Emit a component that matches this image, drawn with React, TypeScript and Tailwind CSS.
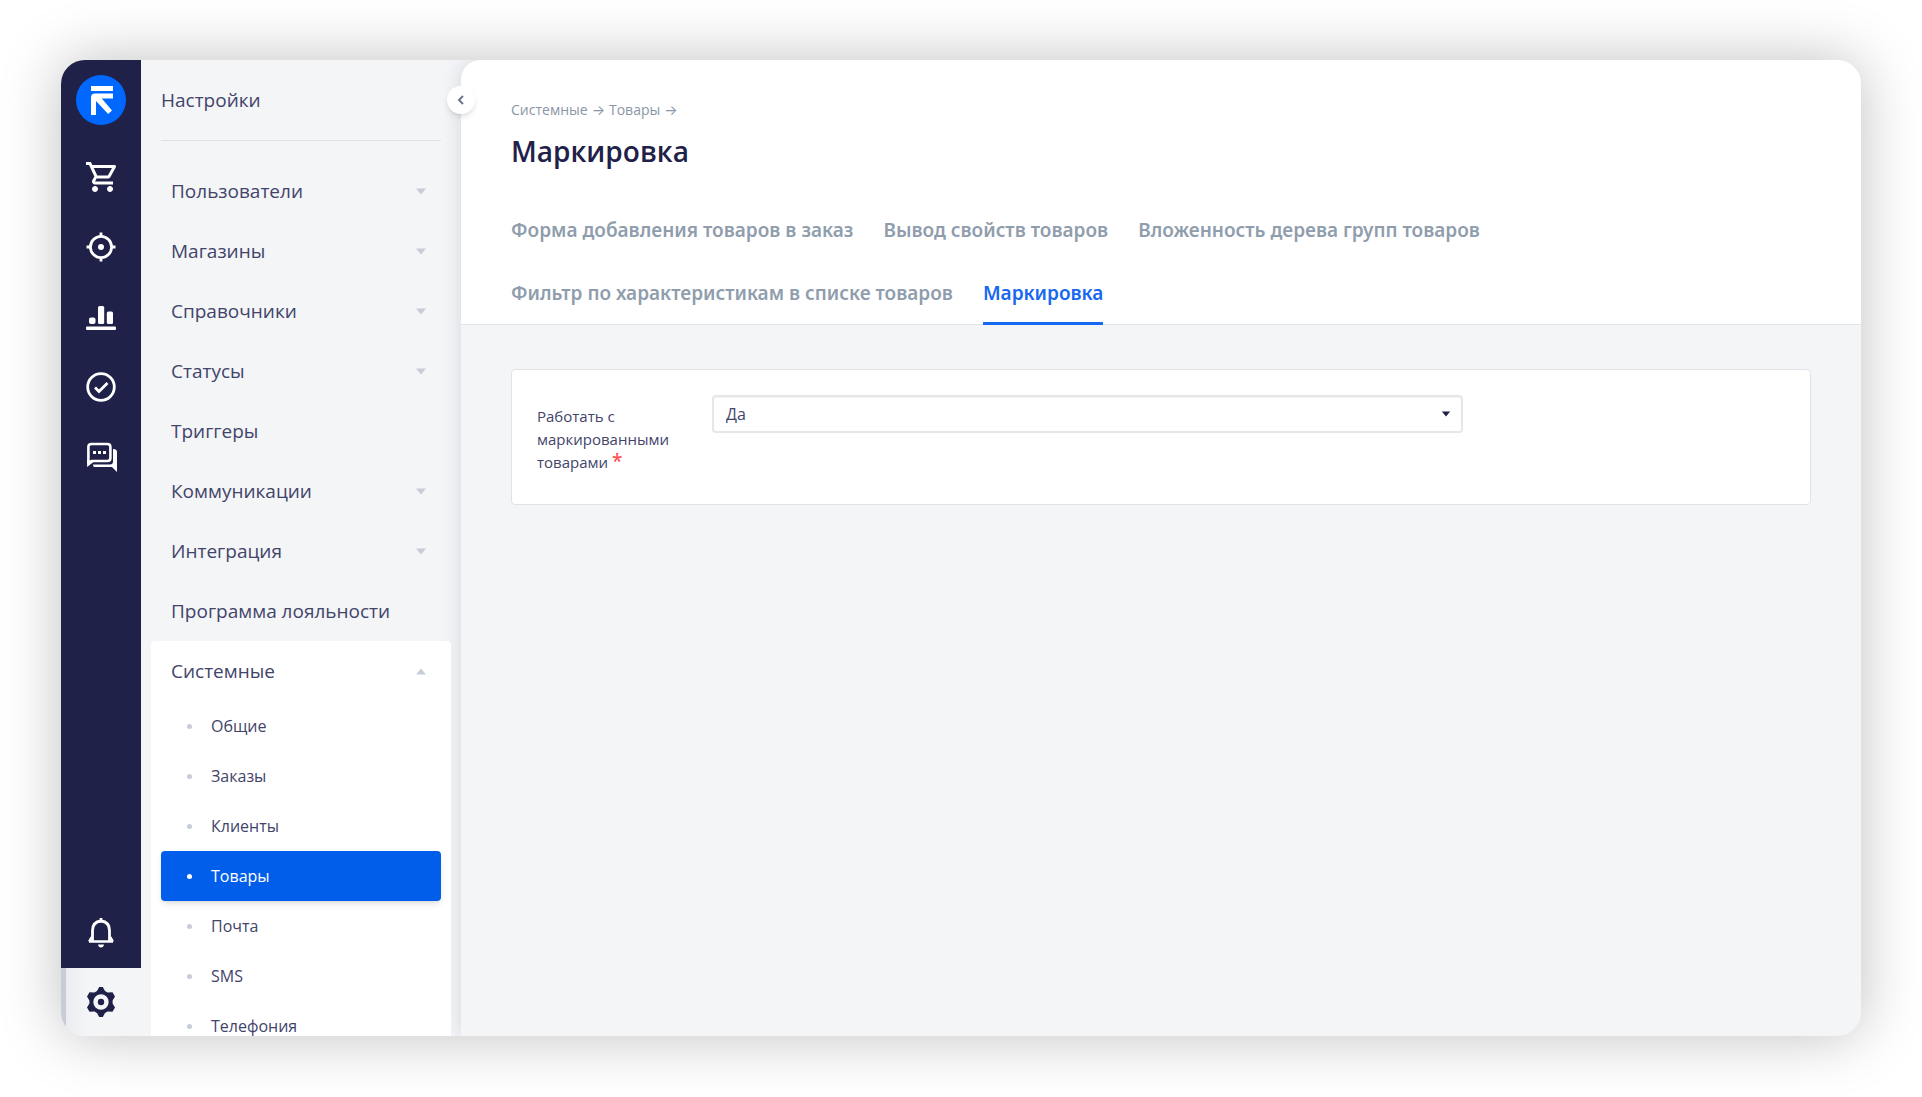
import { useState } from "react";
import type { ReactNode } from "react";
import clsx from "clsx";

interface Section {
  label: string;
  expandable: boolean;
}

const SECTIONS: Section[] = [
  { label: "Пользователи", expandable: true },
  { label: "Магазины", expandable: true },
  { label: "Справочники", expandable: true },
  { label: "Статусы", expandable: true },
  { label: "Триггеры", expandable: false },
  { label: "Коммуникации", expandable: true },
  { label: "Интеграция", expandable: true },
  { label: "Программа лояльности", expandable: false },
];

const SYSTEM_ITEMS = ["Общие", "Заказы", "Клиенты", "Товары", "Почта", "SMS", "Телефония"];

const TABS = [
  "Форма добавления товаров в заказ",
  "Вывод свойств товаров",
  "Вложенность дерева групп товаров",
  "Фильтр по характеристикам в списке товаров",
  "Маркировка",
];

function Logo() {
  return (
    <svg viewBox="0 0 50 50" className="size-[50px]" aria-hidden="true">
      <circle cx="25" cy="25" r="25" fill="#0068ff" />
      <path d="M15 11h22v5H15zM15 22.500q0-4 4-4h18v5H20V40h-5z" fill="#fff" />
      <path d="M19 22h5.500L36 35.500 32.200 39 20 26z" fill="#fff" />
    </svg>
  );
}

function CartIcon() {
  return (
    <svg viewBox="1 2 20 20" className="size-[30px]" fill="currentColor" aria-hidden="true">
      <path d="M15.550 13c.75 0 1.410-.41 1.750-1.030l3.580-6.490A.996.996 0 0 0 20.010 4H5.210l-.94-2H1v2h2l3.600 7.590-1.350 2.440C4.520 15.370 5.480 17 7 17h12v-2H7l1.100-2h7.450zM6.160 6h12.150l-2.760 5H8.530L6.160 6zM7 18c-1.100 0-1.990.9-1.990 2S5.900 22 7 22s2-.9 2-2-.9-2-2-2zm10 0c-1.100 0-1.990.9-1.990 2s.89 2 1.990 2 2-.9 2-2-.9-2-2-2z" />
    </svg>
  );
}

function TargetIcon() {
  return (
    <svg viewBox="0 0 30 30" className="size-[30px]" fill="none" stroke="currentColor" strokeWidth="2.800" aria-hidden="true">
      <circle cx="15" cy="15" r="10.600" />
      <circle cx="15" cy="15" r="3" fill="currentColor" stroke="none" />
      <path d="M15 .5V5M15 25v4.500M.5 15H5M25 15h4.500" />
    </svg>
  );
}

function ChartIcon() {
  return (
    <svg viewBox="0 0 30 30" className="size-[30px]" fill="currentColor" aria-hidden="true">
      <rect x="3" y="15.500" width="6.500" height="6.500" rx="2" />
      <rect x="12" y="4" width="6.200" height="18" rx="1.500" />
      <rect x="20.800" y="9.500" width="6.200" height="12.500" rx="1.500" />
      <rect x="0" y="24.500" width="30" height="3.500" rx="1" />
    </svg>
  );
}

function CheckIcon() {
  return (
    <svg viewBox="0 0 30 30" className="size-[30px]" fill="none" stroke="currentColor" strokeWidth="2.800" aria-hidden="true">
      <circle cx="15" cy="15" r="13.300" />
      <path d="M9 15.500l4 4 8.500-8.500" />
    </svg>
  );
}

function ChatIcon() {
  return (
    <svg viewBox="0 0 32 30" className="h-[30px] w-8" aria-hidden="true">
      <path d="M3.400 21V5q0-3 3-3h16q3 0 3 3v11q0 3-3 3H7z" fill="none" stroke="currentColor" strokeWidth="2.600" strokeLinejoin="round" />
      <path d="M2.100 25V18l7 1.500zM28 7q4 0 4 3v20l-5-5H9.500Q8 25 8 22.500h17q3 0 3-3z" fill="currentColor" />
      <path d="M8 9h3v3H8zM13 9h3v3h-3zM18 9h3v3h-3z" fill="currentColor" />
    </svg>
  );
}

function BellIcon() {
  return (
    <svg viewBox="0 0 30 30" className="size-[30px]" fill="none" stroke="currentColor" strokeWidth="2.800" aria-hidden="true">
      <path d="M6.500 23V12.500q0-8.500 8.500-9.500 8.500 1 8.500 9.500V23" />
      <path d="M3 23.500h24" strokeWidth="2.600" />
      <path d="M5.500 19L3 23.500M24.500 19l2.500 4.500" strokeWidth="2" />
      <path d="M15 0v3" />
      <path d="M12 26.500h6q-.5 3-3 3t-3-3z" fill="currentColor" stroke="none" />
    </svg>
  );
}

function GearIcon() {
  return (
    <svg viewBox="0 0 30 30" className="size-[30px]" aria-hidden="true">
      <path
        fill="currentColor"
        fillRule="evenodd"
        d="M13.200 0h3.600l2.200 4 2.600 1.500 4.900-.2 2.500 4.300-2.400 4v2.800l2.400 4-2.500 4.300-4.900-.2-2.600 1.500-2.200 4h-3.600l-2.200-4-2.600-1.500-4.900.2L1 20.400l2.400-4v-2.800L1 9.600l2.500-4.300 4.900.2L11 4zM15 7.300a7.700 7.700 0 1 0 0 15.400 7.700 7.700 0 0 0 0-15.400z"
      />
      <circle cx="15" cy="15" r="3.200" fill="currentColor" />
    </svg>
  );
}

function Caret({ up = false, className }: { up?: boolean; className?: string }) {
  return (
    <svg viewBox="0 0 12 7" className={clsx("fill-current", className)} aria-hidden="true">
      <path d={up ? "M1 6.500L6 .5l5 6z" : "M1 .5h10l-5 6z"} />
    </svg>
  );
}

function RailButton({ label, children }: { label: string; children: ReactNode }) {
  return (
    <button type="button" aria-label={label} className="flex h-[70px] w-full shrink-0 items-center justify-center text-white">
      {children}
    </button>
  );
}

function Rail() {
  return (
    <nav className="flex w-20 shrink-0 flex-col">
      <div className="flex min-h-0 flex-1 flex-col bg-[#1f2148]">
        <a href="#home" aria-label="Главная" className="flex h-[82px] shrink-0 items-center justify-center pb-[2px]">
          <Logo />
        </a>
        <RailButton label="Заказы"><CartIcon /></RailButton>
        <RailButton label="Цели"><TargetIcon /></RailButton>
        <RailButton label="Аналитика"><ChartIcon /></RailButton>
        <RailButton label="Задачи"><CheckIcon /></RailButton>
        <RailButton label="Чаты"><ChatIcon /></RailButton>
        <div className="mt-auto">
          <RailButton label="Уведомления"><BellIcon /></RailButton>
        </div>
      </div>
      <button
        type="button"
        aria-label="Настройки"
        className="flex h-[68px] w-full shrink-0 items-center justify-center border-l-[5px] border-[#c7cdd6] bg-linear-to-r from-[#ebedf1] to-[#f4f5f7] to-30% pr-[5px] text-[#1f2148]"
      >
        <GearIcon />
      </button>
    </nav>
  );
}

function Sidebar() {
  const [active, setActive] = useState("Товары");

  return (
    <aside className="w-80 shrink-0 text-[#42446a]">
      <h2 className="mx-5 flex h-[81px] items-center border-b border-[#dfe2e7] pt-px text-[19px]">Настройки</h2>

      <ul className="mt-5 px-[10px] text-[19px]">
        {SECTIONS.map(({ label, expandable }) => (
          <li key={label}>
            <button type="button" className="flex h-[60px] w-full items-center justify-between pr-6 pl-5">
              {label}
              {expandable && <Caret className="h-[7px] w-3 text-[#c7cdd6]" />}
            </button>
          </li>
        ))}

        <li className="relative z-10 rounded-[4px] bg-white px-[10px]">
          <button type="button" aria-expanded="true" className="flex h-[60px] w-full items-center justify-between pr-[14px] pl-[10px]">
            Системные
            <Caret up className="h-[7px] w-3 text-[#c7cdd6]" />
          </button>
          <ul className="text-base">
            {SYSTEM_ITEMS.map((item) => (
              <li key={item}>
                <a
                  href="#settings"
                  onClick={() => setActive(item)}
                  className={clsx(
                    "flex h-[50px] items-center gap-[19px] rounded-[4px] px-[26px]",
                    item === active && "bg-[#005eeb] text-white shadow-md",
                  )}
                >
                  <span className={clsx("size-[5px] rounded-full", item === active ? "bg-white" : "bg-[#c7cdd6]")} />
                  {item}
                </a>
              </li>
            ))}
          </ul>
        </li>
      </ul>
    </aside>
  );
}

function PageHeader() {
  return (
    <header className="rounded-tl-[20px] border-b border-[#dfe2e7] bg-white px-[50px] pt-10">
      <div className="flex h-5 items-center gap-1 text-sm text-[#8a96a6]">
        <a href="#system">Системные</a>
        <span className="font-[Inter,sans-serif]">→</span>
        <a href="#products">Товары</a>
        <span className="font-[Inter,sans-serif]">→</span>
      </div>
      <h1 className="mt-[11px] text-[28px] leading-10 font-semibold text-[#1f2148]">Маркировка</h1>

      <nav className="mt-7 -mb-px flex max-w-[1000px] flex-wrap gap-x-[30px] font-['Noto_Sans','Open_Sans',sans-serif] text-[19px] font-semibold text-[#8f9dad]">
        {TABS.map((tab) => (
          <a
            key={tab}
            href="#tab"
            className={clsx(
              "flex h-[63px] items-center border-b-3 pt-[3px]",
              tab === "Маркировка" ? "border-[#1768f0] text-[#1768f0]" : "border-transparent",
            )}
          >
            {tab}
          </a>
        ))}
      </nav>
    </header>
  );
}

function MarkingForm() {
  return (
    <form className="mx-[50px] mt-11 flex gap-[30px] rounded-[4px] border border-[#dfe2e7] bg-white px-[25px] pt-[25px] pb-[30px]">
      <label htmlFor="marking" className="w-[145px] shrink-0 pt-[10px] text-[15px] leading-[23px] text-[#42446a]">
        Работать с маркированными товарами <span className="text-[19px] leading-none font-semibold text-[#ff5353]">*</span>
      </label>
      <div className="relative h-[38px] max-w-[751px] flex-1">
        <select
          id="marking"
          defaultValue="yes"
          className="size-full appearance-none rounded-[4px] border-2 border-[#e6e7ea] bg-white px-3 text-base text-[#42446a] inset-shadow-xs"
        >
          <option value="yes">Да</option>
          <option value="no">Нет</option>
        </select>
        <Caret className="pointer-events-none absolute top-4 right-3 h-[6px] w-[10px] text-[#1f2148]" />
      </div>
    </form>
  );
}

export default function App() {
  return (
    <div className="h-screen bg-white p-[61px] pt-[60px] font-['Open_Sans','Noto_Sans',sans-serif]">
      <div className="flex h-full overflow-hidden rounded-[24px] bg-[#f4f5f7] shadow-[0_0_60px_rgba(0,0,0,0.25)]">
        <Rail />
        <Sidebar />
        <main className="relative min-w-0 flex-1 rounded-tl-[20px] bg-[#f4f5f7] shadow-[0_0_20px_rgba(31,33,72,0.14)]">
          <button
            type="button"
            aria-label="Свернуть меню"
            className="absolute top-[26px] -left-[14px] z-20 flex size-7 items-center justify-center rounded-full bg-white text-[#6b7688] shadow-md"
          >
            <svg viewBox="0 0 8 10" className="h-[10px] w-2 fill-none stroke-current stroke-2" aria-hidden="true">
              <path d="M6 1L2 5l4 4" />
            </svg>
          </button>
          <PageHeader />
          <MarkingForm />
        </main>
      </div>
    </div>
  );
}
